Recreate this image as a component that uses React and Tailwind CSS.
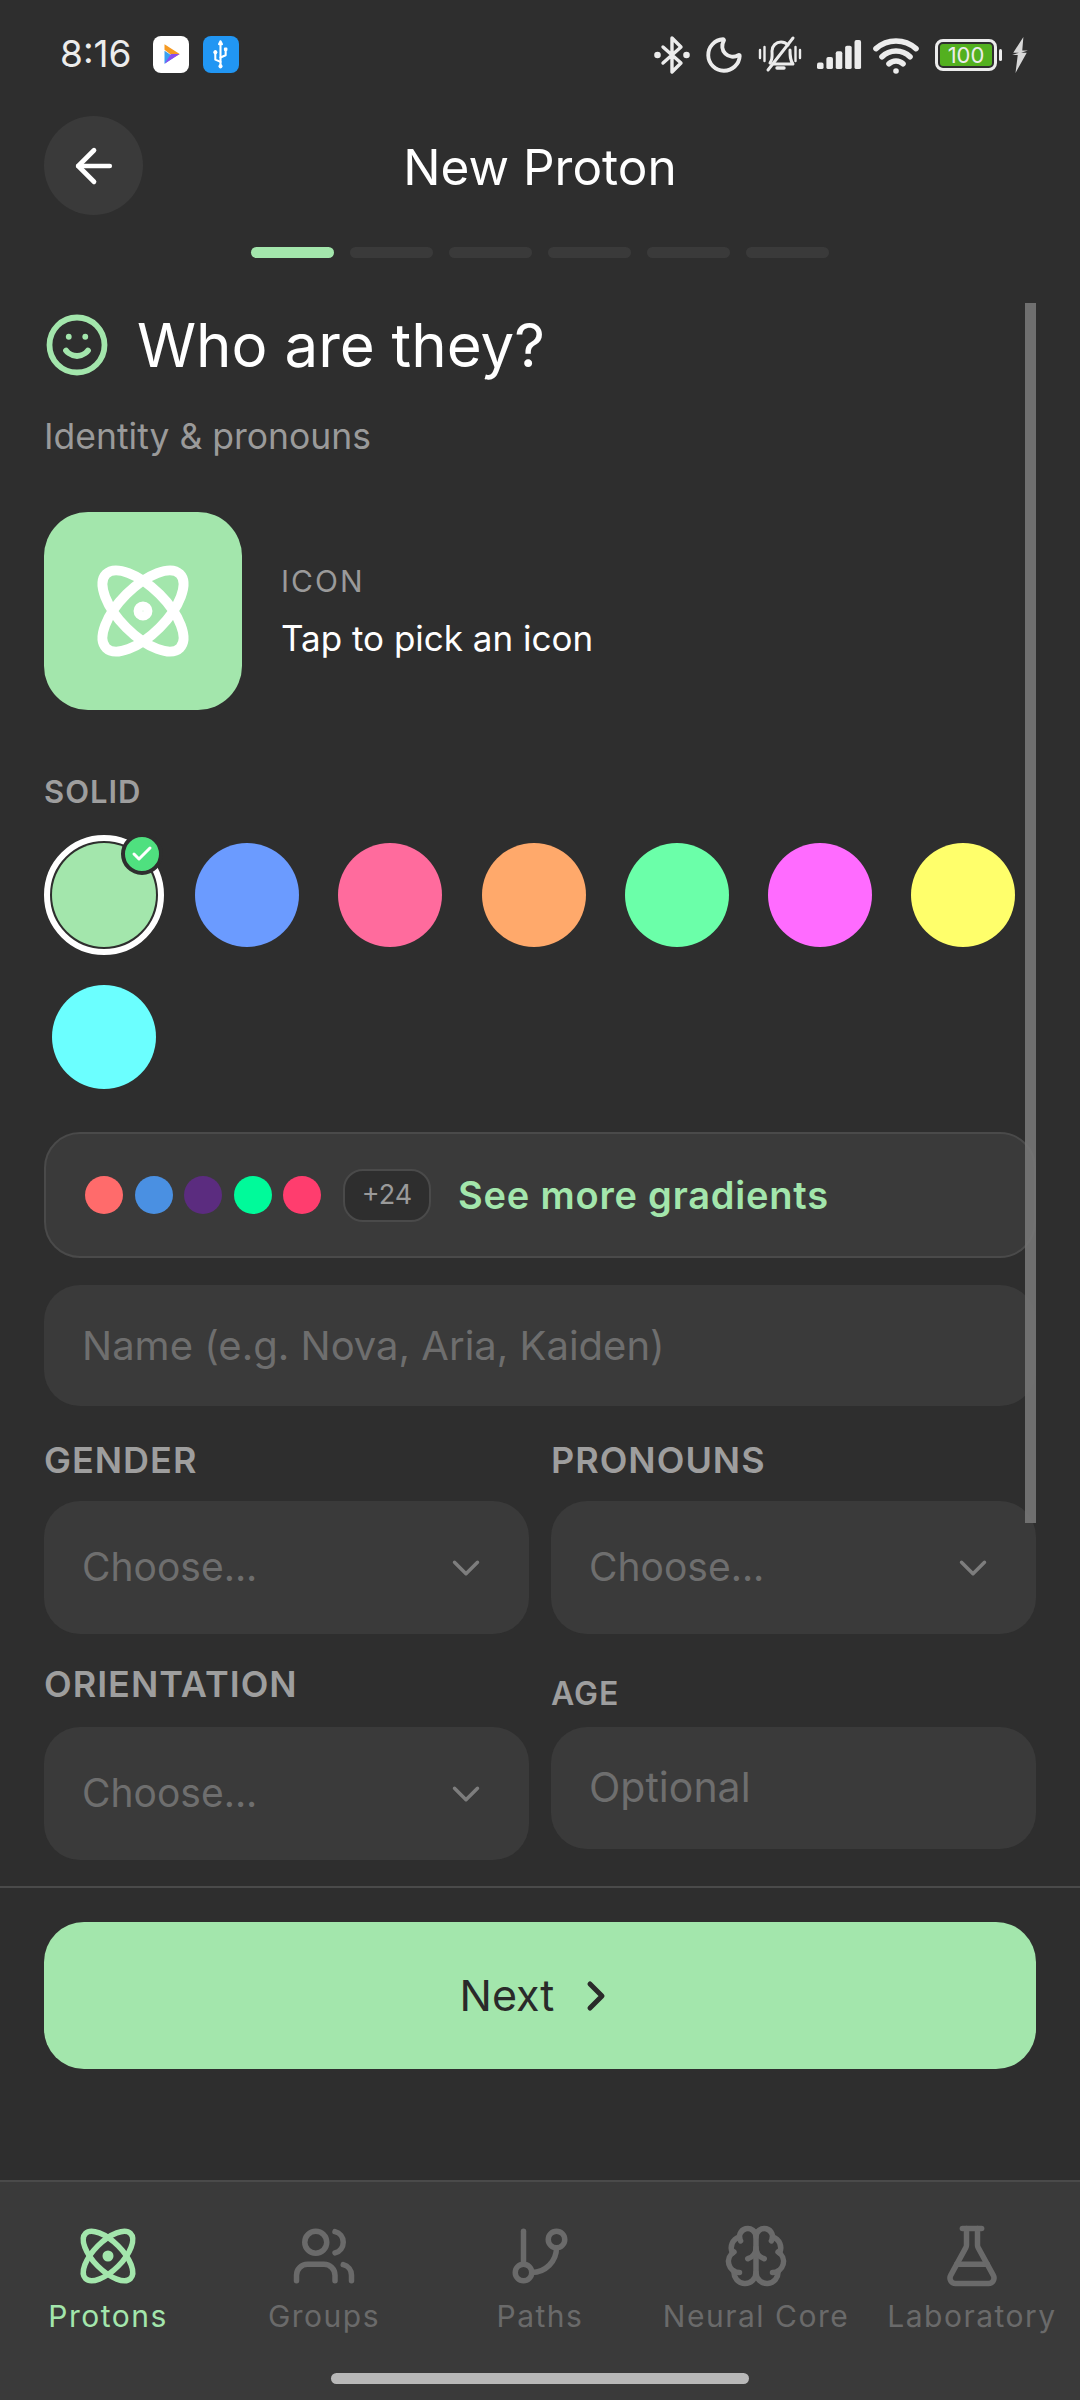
import React from "react";
import {
  ArrowLeft,
  Atom,
  Brain,
  Check,
  ChevronDown,
  ChevronRight,
  FlaskConical,
  GitBranch,
  Moon,
  Smile,
  Usb,
  Users,
  Wifi
} from "lucide-react";

const SOLIDS = ["bg-[#a3e6ac]", "bg-[#6b9bff]", "bg-[#ff6b9d]", "bg-[#ffa96b]", "bg-[#6bffa9]", "bg-[#ff6bff]", "bg-[#ffff6b]", "bg-[#6bffff]"];
const GRADIENT_DOTS = ["bg-[#ff6b6b]", "bg-[#4a90e2]", "bg-[#5b2c7f]", "bg-[#00fa9a]", "bg-[#ff3d6e]"];

const NAV = [
  { label: "Protons", Icon: Atom, active: true },
  { label: "Groups", Icon: Users },
  { label: "Paths", Icon: GitBranch },
  { label: "Neural Core", Icon: Brain },
  { label: "Laboratory", Icon: FlaskConical }
];

const BluetoothIcon = () => (
  <svg viewBox="0 0 36 40" className="h-[40px] w-[36px]" fill="none" stroke="#ececec" strokeWidth="3.4" strokeLinejoin="round" strokeLinecap="round">
    <path d="M9 12 L27 28 L18 37 V3 L27 12 L9 28" />
    <circle cx="3.5" cy="20" r="1.6" fill="#ececec" />
    <circle cx="32.5" cy="20" r="1.6" fill="#ececec" />
  </svg>
);

const MutedBellIcon = () => (
  <svg viewBox="0 0 46 40" className="h-[40px] w-[46px]" fill="none" stroke="#ececec" strokeWidth="3" strokeLinecap="round" strokeLinejoin="round">
    <path d="M13 28 C16 24 15 20 15 16 C15 11 19 7 24 7 C27 7 29 8 31 10" />
    <path d="M33 15 C33 21 33 25 36 29 H17" />
    <path d="M20 33 H27" strokeWidth="3.4" />
    <path d="M36 3 L11 35" />
    <path d="M3 15 V23 M7.5 12 V26 M38.5 12 V26 M43 15 V23" strokeWidth="2.4" />
  </svg>
);

const StatusBar = () => (
  <div className="flex h-[108px] items-start justify-between pl-[60px] pr-[51px] pt-[34px] text-[#ececec]">
    <div className="flex items-center">
      <span className="text-[37px] leading-[40px]">8:16</span>
      <div className="ml-[21px] flex h-[37px] w-[36px] items-center justify-center rounded-[8px] bg-white">
        <svg viewBox="0 0 24 24" className="h-[26px] w-[26px]">
          <path d="M6 3 L20 12 L15 15 L6 8 Z" fill="#f59a23" />
          <path d="M6 9 L15 15 L6 21 Z" fill="#3aa0f0" />
          <path d="M20 12 L6 21 L12 12 Z" fill="#8a4cf0" />
        </svg>
      </div>
      <div className="ml-[14px] flex h-[37px] w-[36px] items-center justify-center rounded-[8px] bg-[#2196f3]">
        <Usb size={25} className="rotate-[-45deg] text-white" strokeWidth={2} />
      </div>
    </div>
    <div className="mt-[-3px] flex items-center">
      <BluetoothIcon />
      <Moon size={42} strokeWidth={2.2} className="ml-[13px]" />
      <div className="ml-[12px]"><MutedBellIcon /></div>
      <svg viewBox="0 0 48 32" className="ml-[13px] h-[30px] w-[47px]" fill="#ececec">
        <rect x="0" y="24" width="7" height="7" rx="2" />
        <rect x="10" y="18" width="7" height="13" rx="2" />
        <rect x="20" y="12" width="7" height="19" rx="2" />
        <rect x="30" y="6" width="7" height="25" rx="2" />
        <rect x="40" y="0" width="7" height="31" rx="2" />
      </svg>
      <Wifi size={48} strokeWidth={2.8} className="ml-[9px]" />
      <div className="ml-[15px] flex items-center">
        <div className="flex h-[32px] w-[62px] items-center justify-center rounded-[8px] border-[3px] border-[#ececec] p-[2px]">
          <div className="flex h-full w-full items-center justify-center rounded-[3px] bg-[#53b01f] text-[22px] leading-none text-[#ececec]">100</div>
        </div>
        <div className="ml-[2px] h-[12px] w-[3px] rounded-full bg-[#ececec]" />
      </div>
      <svg viewBox="0 0 16 32" className="ml-[9px] h-[38px] w-[18px]" fill="#d8d8d8">
        <path d="M11 0 L2 14 H7 L1 16 H6 L4 32 L14 14 H9 L15 12 H10 Z" />
      </svg>
    </div>
  </div>
);

const FieldLabel = ({ children, className = "" }) => (
  <p className={`font-semibold tracking-[1px] text-[#9e9e9e] ${className}`}>{children}</p>
);

const Select = () => (
  <div className="flex h-[133px] items-center justify-between rounded-[36px] bg-[#3a3a3a] pl-[38px] pr-[40px]">
    <span className="text-[39px] text-[#6e6e6e]">Choose...</span>
    <ChevronDown size={46} className="text-[#7d7d7d]" strokeWidth={1.8} />
  </div>
);

const App = () => {
  return (
    <div className="flex h-[2400px] w-[1080px] flex-col overflow-hidden bg-[#2e2e2e] font-['Inter',sans-serif] text-white">
      <StatusBar />

      <div className="relative flex h-[139px] items-start justify-center">
        <div className="absolute left-[44px] top-[8px] flex h-[99px] w-[99px] items-center justify-center rounded-full bg-[#3a3a3a]">
          <ArrowLeft size={54} strokeWidth={2.1} />
        </div>
        <h1 className="pt-[30px] text-[49.5px] leading-[58px]">New Proton</h1>
      </div>

      <div className="flex justify-center gap-[16px]">
        {[0, 1, 2, 3, 4, 5].map((step) => (
          <div key={step} className={step === 0 ? "h-[11px] w-[83px] rounded-full bg-[#a3e6ac]" : "h-[11px] w-[83px] rounded-full bg-[#3a3a3a]"} />
        ))}
      </div>

      <div className="relative h-[1628px] shrink-0 px-[44px]">
        <div className="absolute right-[44px] top-[45px] z-10 h-[1220px] w-[11px] bg-[#777777]/90" />

        <div className="flex items-center gap-[27px] pt-[50px]">
          <Smile size={66} className="text-[#a3e6ac]" strokeWidth={2.1} />
          <h2 className="text-[60px] leading-[74px]">Who are they?</h2>
        </div>
        <p className="mt-[33px] text-[35.5px] leading-[44px] text-[#9a9a9a]">Identity &amp; pronouns</p>

        <div className="mt-[53px] flex items-center gap-[39px]">
          <div className="flex h-[198px] w-[198px] items-center justify-center rounded-[44px] bg-[#a3e6ac]">
            <Atom size={108} strokeWidth={2.2} />
          </div>
          <div>
            <p className="text-[30px] leading-[36px] tracking-[2px] text-[#9a9a9a]">ICON</p>
            <p className="mt-[17px] text-[35px] leading-[44px]">Tap to pick an icon</p>
          </div>
        </div>

        <FieldLabel className="mt-[64px] text-[31px] leading-[36px]">SOLID</FieldLabel>

        <div className="mt-[25px] flex flex-wrap gap-x-[23.2px] gap-y-[22px]">
          {SOLIDS.map((color, index) => (
            <div key={color} className="relative flex h-[120px] w-[120px] items-center justify-center">
              {index === 0 && <div className="absolute inset-0 rounded-full border-[6px] border-white" />}
              <div className={`h-[104px] w-[104px] rounded-full ${color}`} />
              {index === 0 && (
                <div className="absolute right-[1px] top-[-2px] flex h-[42px] w-[42px] items-center justify-center rounded-full border-[4px] border-[#2e2e2e] bg-[#4fe07f]">
                  <Check size={24} strokeWidth={3} />
                </div>
              )}
            </div>
          ))}
        </div>

        <div className="mt-[35px] flex h-[126px] items-center rounded-[36px] border-2 border-[#4a4a4a] bg-[#3a3a3a] pl-[39px]">
          <div className="flex gap-[11.5px]">
            {GRADIENT_DOTS.map((color) => (
              <div key={color} className={`h-[38px] w-[38px] rounded-full ${color}`} />
            ))}
          </div>
          <div className="ml-[22px] flex h-[53px] w-[88px] items-center justify-center rounded-[20px] border-2 border-[#4a4a4a] bg-[#2e2e2e] text-[27px] text-[#9a9a9a]">+24</div>
          <span className="ml-[27px] text-[38px] font-semibold tracking-[0.8px] text-[#a3e6ac]">See more gradients</span>
        </div>

        <div className="mt-[27px] flex h-[121px] items-center rounded-[36px] bg-[#3a3a3a] pl-[38px]">
          <span className="text-[40px] text-[#6e6e6e]">Name (e.g. Nova, Aria, Kaiden)</span>
        </div>

        <div className="mt-[33px] grid grid-cols-2 gap-x-[22px]">
          <div>
            <FieldLabel className="text-[36px] leading-[42px]">GENDER</FieldLabel>
            <div className="mt-[20px]"><Select /></div>
          </div>
          <div>
            <FieldLabel className="text-[36px] leading-[42px]">PRONOUNS</FieldLabel>
            <div className="mt-[20px]"><Select /></div>
          </div>
          <div className="mt-[29px]">
            <FieldLabel className="text-[36px] leading-[42px]">ORIENTATION</FieldLabel>
            <div className="mt-[22px]"><Select /></div>
          </div>
          <div className="mt-[42px]">
            <FieldLabel className="text-[32px] leading-[36px]">AGE</FieldLabel>
            <div className="mt-[15px] flex h-[122px] items-center rounded-[36px] bg-[#3a3a3a] pl-[38px]">
              <span className="text-[41px] text-[#6e6e6e]">Optional</span>
            </div>
          </div>
        </div>
      </div>

      <div className="h-[2px] shrink-0 bg-[#4a4a4a]" />

      <div className="px-[44px] pt-[34px]">
        <div className="flex h-[147px] items-center justify-center gap-[18px] rounded-[40px] bg-[#a3e6ac] text-[#2a2a2a]">
          <span className="text-[43px]">Next</span>
          <ChevronRight size={48} strokeWidth={2.5} />
        </div>
      </div>

      <div className="mt-[111px] flex flex-1 flex-col border-t-2 border-[#4a4a4a] bg-[#3a3a3a]">
        <div className="flex pt-[41px]">
          {NAV.map(({ label, Icon, active }) => (
            <div key={label} className={active ? "flex w-[216px] flex-col items-center text-[#a3e6ac]" : "flex w-[216px] flex-col items-center text-[#6a6a6a]"}>
              <Icon size={66} strokeWidth={2} />
              <span className="mt-[8px] text-[30px] leading-[38px] tracking-[1.5px]">{label}</span>
            </div>
          ))}
        </div>
        <div className="mx-auto mb-[16px] mt-auto h-[11px] w-[418px] rounded-full bg-[#b8b8b8]" />
      </div>
    </div>
  );
};

export default App;
